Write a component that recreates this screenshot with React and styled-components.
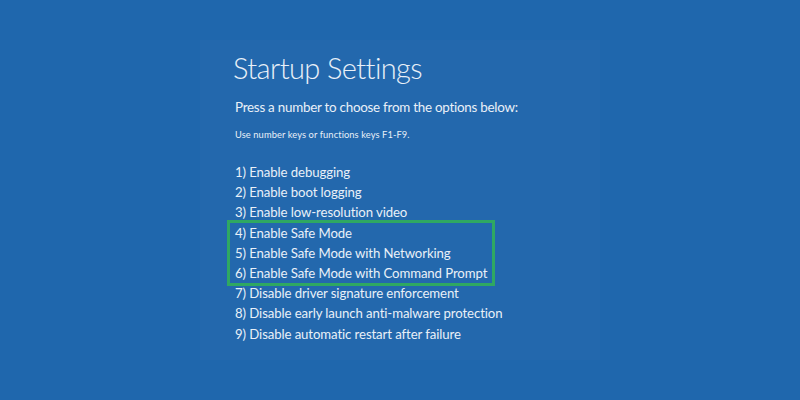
import React from 'react';
import styled, { createGlobalStyle } from 'styled-components';

const GlobalStyle = createGlobalStyle`
  html, body {
    margin: 0;
    padding: 0;
    background: #1f67ad;
  }
  body {
    font-family: Lato, 'Open Sans', 'Liberation Sans', sans-serif;
  }
`;

const Screen = styled.div`
  width: 800px;
  height: 400px;
  background: #1f67ad;
  display: flex;
  justify-content: center;
  align-items: flex-start;
  overflow: hidden;
`;

const Panel = styled.div`
  margin-top: 40px;
  width: 400px;
  height: 320px;
  box-sizing: border-box;
  padding: 10px 0 0 33px;
  background: #2368ad;
  color: #e9f0f8;
  display: flex;
  flex-direction: column;
`;

const Title = styled.h1`
  margin: 0;
  font-size: 29px;
  font-weight: 300;
  line-height: 36px;
  letter-spacing: -0.6px;
`;

const Prompt = styled.p`
  margin: 12px 0 0 2px;
  font-size: 13.4px;
  font-weight: 400;
  line-height: 18px;
  letter-spacing: -0.25px;
`;

const Hint = styled.p`
  margin: 13px 0 0 2px;
  font-size: 9.3px;
  line-height: 12px;
  letter-spacing: 0.1px;
`;

const Options = styled.ul`
  list-style: none;
  margin: 21px 0 0 2px;
  padding: 0;
  display: flex;
  flex-direction: column;
`;

const Group = styled.div`
  margin: -3px 0 -3px -8px;
  width: 268px;
  border: 3px solid #2fa862;
  box-sizing: border-box;
  padding: 0 0 0 5px;
`;

const Option = styled.li`
  font-size: 13.2px;
  line-height: 20.2px;
  letter-spacing: -0.1px;
  white-space: nowrap;
`;

const options = [
  'Enable debugging',
  'Enable boot logging',
  'Enable low-resolution video',
  'Enable Safe Mode',
  'Enable Safe Mode with Networking',
  'Enable Safe Mode with Command Prompt',
  'Disable driver signature enforcement',
  'Disable early launch anti-malware protection',
  'Disable automatic restart after failure',
];

const renderOption = (text, i) => (
  <Option key={i}>
    {i + 1}) {text}
  </Option>
);

const App = () => {
  return (
    <Screen>
      <GlobalStyle />
      <Panel>
        <Title>Startup Settings</Title>
        <Prompt>Press a number to choose from the options below:</Prompt>
        <Hint>Use number keys or functions keys F1-F9.</Hint>
        <Options>
          {options.slice(0, 3).map((t, i) => renderOption(t, i))}
          <Group>{options.slice(3, 6).map((t, i) => renderOption(t, i + 3))}</Group>
          {options.slice(6).map((t, i) => renderOption(t, i + 6))}
        </Options>
      </Panel>
    </Screen>
  );
};

export default App;
